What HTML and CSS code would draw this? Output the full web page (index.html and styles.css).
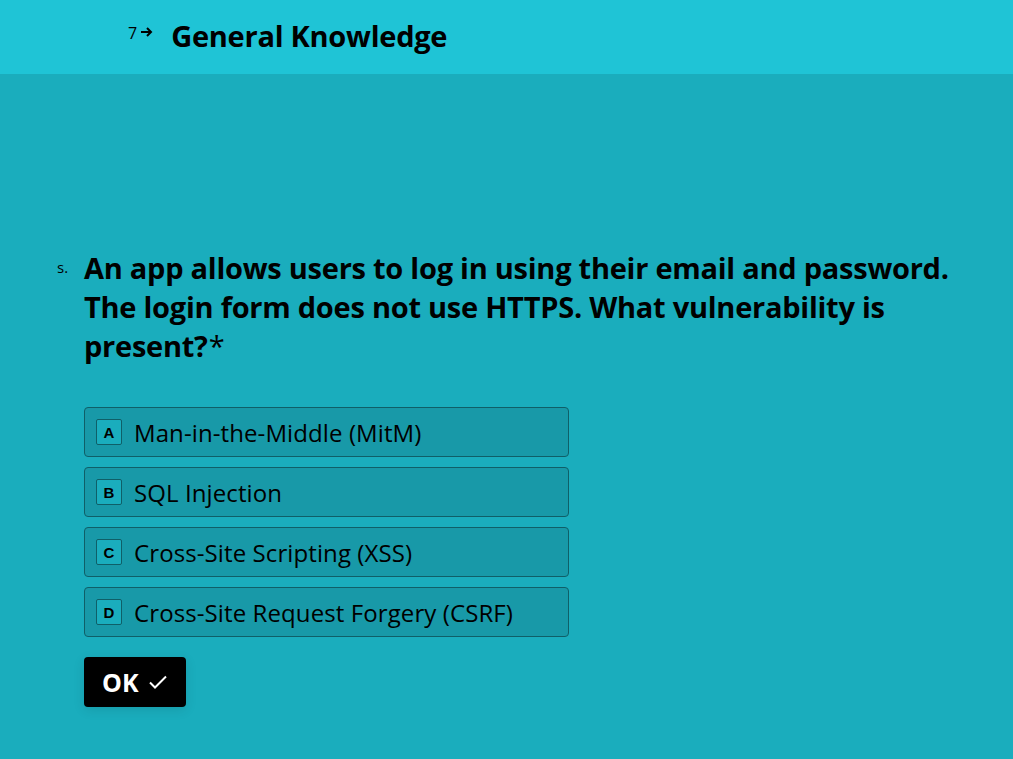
FILE: index.html
```html
<!DOCTYPE html>
<html>
<head>
<meta charset="utf-8">
<link rel="stylesheet" href="styles.css">
</head>
<body>
<header class="topbar">
  <span class="sec-num">7</span>
  <svg class="sec-arrow" width="14" height="12" viewBox="0 0 14 12"><path d="M1 6h10M7 2l4 4-4 4" fill="none" stroke="#000" stroke-width="2"/></svg>
  <h1 class="sec-title">General Knowledge</h1>
</header>
<main class="main">
  <div class="question">
    <span class="q-num">s.</span>
    <div class="q-body">
      <h2 class="q-text">An app allows users to log in using their email and password. The login form does not use HTTPS. What vulnerability is present?<span class="req">*</span></h2>
      <div class="options">
        <div class="option"><span class="key">A</span><span class="opt-text">Man-in-the-Middle (MitM)</span></div>
        <div class="option"><span class="key">B</span><span class="opt-text">SQL Injection</span></div>
        <div class="option"><span class="key">C</span><span class="opt-text">Cross-Site Scripting (XSS)</span></div>
        <div class="option"><span class="key">D</span><span class="opt-text">Cross-Site Request Forgery (CSRF)</span></div>
      </div>
      <button class="ok">OK <svg width="20" height="16" viewBox="0 0 20 16"><path d="M2 8.5l5 5L18 2.5" fill="none" stroke="#fff" stroke-width="2"/></svg></button>
    </div>
  </div>
</main>
</body>
</html>
```
FILE: styles.css
```css
html, body { margin: 0; padding: 0; }
body {
  background: #1aadbd;
  font-family: "Open Sans", "Noto Sans", sans-serif;
  color: #000;
  height: 759px;
  overflow: hidden;
}
.topbar {
  height: 74px;
  background: #1fc4d6;
  display: flex;
  align-items: center;
  padding-left: 128px;
  padding-bottom: 4px;
  box-sizing: border-box;
}
.sec-num { font-size: 16px; margin-top: -4px; }
.sec-arrow { margin-left: 3px; margin-top: -6px; }
.sec-title {
  margin: 0 0 0 17px;
  font-size: 29px;
  font-weight: 700;
  letter-spacing: -0.25px;
}
.main { padding: 174px 0 0 57px; }
.question { display: flex; }
.q-num { width: 27px; font-size: 15px; padding-top: 9px; }
.q-body { width: 872px; }
.q-text {
  margin: 0;
  font-size: 29px;
  line-height: 39px;
  font-weight: 700;
  letter-spacing: -0.25px;
}
.req { font-weight: 400; margin-left: 1px; }
.options {
  margin-top: 42px;
  display: flex;
  flex-direction: column;
  gap: 10px;
  width: 485px;
}
.option {
  height: 50px;
  box-sizing: border-box;
  background: #1899a8;
  border: 1px solid #0f5f68;
  border-radius: 4px;
  display: flex;
  align-items: center;
  padding-left: 11px;
}
.key {
  width: 26px;
  height: 26px;
  box-sizing: border-box;
  border: 1px solid #0f5f68;
  border-radius: 2px;
  background: #1aadbd;
  display: flex;
  align-items: center;
  justify-content: center;
  font-family: "Liberation Sans", Arial, sans-serif;
  font-size: 15px;
  font-weight: 700;
}
.opt-text {
  margin-left: 12px;
  font-size: 24px;
  letter-spacing: 0.1px;
}
.ok {
  margin-top: 20px;
  width: 102px;
  height: 50px;
  background: #000;
  color: #fff;
  border: none;
  border-radius: 4px;
  font-family: inherit;
  font-size: 25px;
  font-weight: 700;
  display: flex;
  align-items: center;
  padding: 0 0 0 18px;
  gap: 9px;
  box-shadow: 0 3px 12px rgba(0,0,0,0.1);
}
```
